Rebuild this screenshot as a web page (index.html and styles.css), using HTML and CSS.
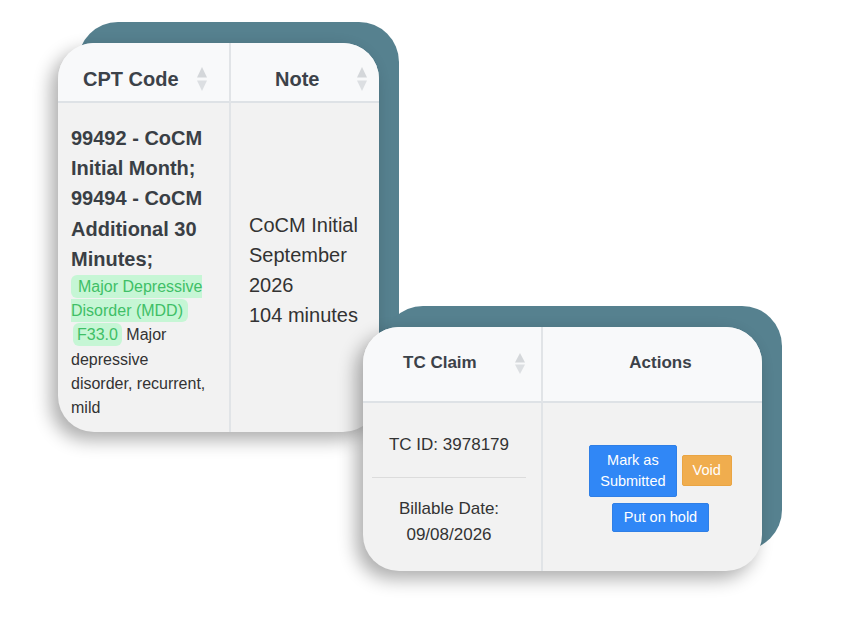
FILE: index.html
```html
<!DOCTYPE html>
<html lang="en">
<head>
<meta charset="utf-8">
<title>Claims</title>
<link rel="stylesheet" href="styles.css">
</head>
<body>
<div class="canvas">

  <div class="card card-cpt">
    <div class="table">
      <div class="th th-cpt">
        <span>CPT Code</span>
        <svg class="sort" width="10" height="24" viewBox="0 0 10 24"><polygon points="0,10.5 5,0 10,10.5" fill="#d4d7da"/><polygon points="0,13.5 10,13.5 5,24" fill="#dcdfe2"/></svg>
      </div>
      <div class="th th-note">
        <span>Note</span>
        <svg class="sort" width="10" height="24" viewBox="0 0 10 24"><polygon points="0,10.5 5,0 10,10.5" fill="#d4d7da"/><polygon points="0,13.5 10,13.5 5,24" fill="#dcdfe2"/></svg>
      </div>
      <div class="td td-cpt">
        <div class="codes">99492 - CoCM Initial Month; 99494 - CoCM Additional 30 Minutes;</div>
        <div class="dx"><span class="tag tag-first">Major Depressive Disorder (MDD)</span> <span class="tag tag-code">F33.0</span> Major depressive disorder, recurrent, mild</div>
      </div>
      <div class="td td-note">
        <p class="note">CoCM Initial September 2026<br>104 minutes</p>
      </div>
    </div>
  </div>

  <div class="card card-claim">
    <div class="table">
      <div class="th th-claim">
        <span>TC Claim</span>
        <svg class="sort" width="10" height="21" viewBox="0 0 10 21"><polygon points="0,9.5 5,0 10,9.5" fill="#d4d7da"/><polygon points="0,11.5 10,11.5 5,21" fill="#dcdfe2"/></svg>
      </div>
      <div class="th th-actions">
        <span>Actions</span>
      </div>
      <div class="td td-claim">
        <div class="line line-id">TC ID: 3978179</div>
        <div class="rule"></div>
        <div class="line line-date">Billable Date:<br>09/08/2026</div>
      </div>
      <div class="td td-actions">
        <div class="buttons">
          <button class="btn btn-primary btn-two">Mark as<br>Submitted</button>
          <button class="btn btn-warning">Void</button>
          <button class="btn btn-primary btn-hold">Put on hold</button>
        </div>
      </div>
    </div>
  </div>

</div>
</body>
</html>
```

FILE: styles.css
```css
html {
  background: #ffffff;
}
body {
  margin: 0;
  font-family: "Liberation Sans", Arial, Helvetica, sans-serif;
  color: #333333;
}
.canvas {
  position: relative;
  width: 847px;
  height: 624px;
  overflow: hidden;
}

/* cards placed on the free canvas */
.card {
  position: absolute;
}
.card::before {
  content: "";
  position: absolute;
  left: 0;
  top: 0;
  right: 0;
  bottom: 0;
  transform: translate(20px, -21px);
  background: #56818f;
  border-radius: 40px;
  z-index: -1;
}
.card-cpt {
  left: 58px;
  top: 43px;
  width: 321px;
  height: 389px;
}
.card-claim {
  left: 363px;
  top: 327px;
  width: 399px;
  height: 244px;
}

.table {
  height: 100%;
  border-radius: 36px;
  overflow: hidden;
  background: #f2f2f2;
  box-shadow: -7px 8px 18px rgba(0, 0, 0, 0.32);
  display: grid;
}
.card-cpt .table {
  grid-template-columns: 173px 148px;
  grid-template-rows: 60px 1fr;
}
.card-claim .table {
  grid-template-columns: 180px 219px;
  grid-template-rows: 76px 1fr;
}

.th {
  background: #f8f9fa;
  border-bottom: 2px solid #dee2e6;
  display: flex;
  align-items: center;
  justify-content: space-between;
  font-weight: bold;
  color: #3c4249;
  box-sizing: border-box;
}
.th:first-child,
.td-cpt,
.td-claim {
  border-right: 2px solid #e1e4e7;
}
.th-cpt {
  font-size: 20px;
  padding: 14px 22px 0 25px;
}
.th-note {
  font-size: 20px;
  padding: 14px 12px 0 44px;
}
.th-claim {
  font-size: 17px;
  padding: 0 16px 2px 40px;
}
.th-actions {
  font-size: 17px;
  justify-content: center;
  padding: 0 0 2px 16px;
}
.sort {
  display: block;
  flex: none;
}

.td {
  box-sizing: border-box;
}
.td-cpt {
  padding: 20px 20px 0 13px;
}
.codes {
  font-size: 20px;
  line-height: 30.2px;
  font-weight: bold;
  color: #3a3f45;
}
.dx {
  font-size: 16px;
  line-height: 24.2px;
  color: #333333;
  margin-top: 1px;
}
.tag {
  background: #c6f6d5;
  color: #3fbf67;
  border-radius: 6px;
  padding: 3px 4px;
}
.tag-first {
  padding: 3px 5px 3px 7px;
}
.tag-code {
  margin-left: 2px;
}

.td-note {
  display: flex;
  align-items: center;
  padding: 5px 8px 0 18px;
}
.note {
  margin: 0;
  font-size: 20px;
  line-height: 30.2px;
  color: #333333;
}

.td-claim {
  display: flex;
  flex-direction: column;
  align-items: stretch;
  padding: 29px 15px 0 9px;
  font-size: 17px;
  line-height: 26px;
  color: #333333;
  text-align: center;
}
.rule {
  height: 1px;
  background: #dcdcdc;
  margin: 19px 0 18px;
}

.td-actions {
  display: flex;
  align-items: center;
  justify-content: center;
  padding: 0 0 0 16px;
}
.buttons {
  display: flex;
  flex-wrap: wrap;
  justify-content: center;
  align-items: center;
  column-gap: 5px;
  row-gap: 6px;
  width: 203px;
  margin-top: 2px;
}
.btn {
  font-family: "Liberation Sans", Arial, Helvetica, sans-serif;
  font-size: 14.5px;
  line-height: 21px;
  color: #ffffff;
  border-radius: 2px;
  padding: 4px 10px;
  margin: 0;
  cursor: pointer;
}
.btn-primary {
  background: #3087f6;
  border: 1px solid #2f7fe6;
}
.btn-warning {
  background: #f0ad4e;
  border: 1px solid #eaa543;
}
.btn-two {
  padding: 4px 10px;
}
.btn-hold {
  padding: 3px 11px;
}
```
